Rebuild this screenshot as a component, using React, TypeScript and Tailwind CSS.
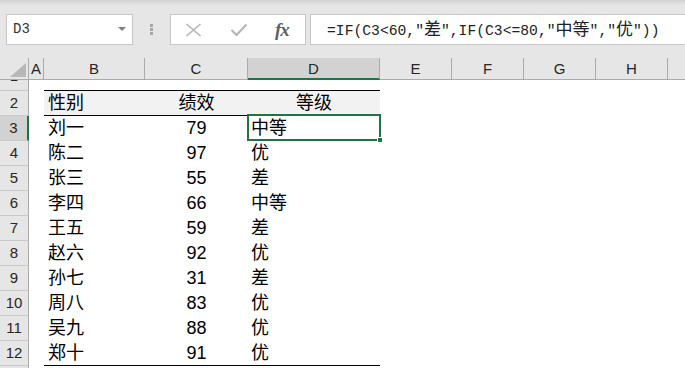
import type { ReactNode } from "react";

const COLS = [
  { key: "A", w: "w-[15px]" },
  { key: "B", w: "w-[101px]" },
  { key: "C", w: "w-[103px]" },
  { key: "D", w: "w-[132px]" },
  { key: "E", w: "w-[72px]" },
  { key: "F", w: "w-[72px]" },
  { key: "G", w: "w-[72px]" },
  { key: "H", w: "w-[72px]" },
  { key: "", w: "w-[72px]" },
] as const;

const ROWS: [string, number, string][] = [
  ["刘一", 79, "中等"],
  ["陈二", 97, "优"],
  ["张三", 55, "差"],
  ["李四", 66, "中等"],
  ["王五", 59, "差"],
  ["赵六", 92, "优"],
  ["孙七", 31, "差"],
  ["周八", 83, "优"],
  ["吴九", 88, "优"],
  ["郑十", 91, "优"],
];

const cellFont = "font-['Liberation_Sans','Noto_Sans_CJK_SC',sans-serif] text-[18px] text-black";
const hdrFont = "font-['Liberation_Sans',sans-serif] text-[15px] text-[#262626]";

function Cjk({ children }: { children: ReactNode }) {
  return (
    <span className="font-['Noto_Sans_CJK_SC',sans-serif] text-[17px]">{children}</span>
  );
}

function RowHead({ n, h, active }: { n: number; h: string; active?: boolean }) {
  return (
    <div
      className={`${h} w-[29px] shrink-0 flex items-center justify-center border-b border-[#c9c9c9] ${hdrFont} ${
        active
          ? "bg-[#d2d2d2] border-r-2 border-r-[#217346] text-[#217346]"
          : "bg-[#e6e6e6] border-r border-r-[#ababab]"
      }`}
    >
      {n}
    </div>
  );
}

export default function App() {
  return (
    <div className="w-[685px] h-[368px] overflow-hidden bg-[#e6e6e6] flex flex-col">
      <div className="h-[5px] shrink-0 bg-gradient-to-b from-[#d2d2d2] to-[#e6e6e6]" />

      {/* formula bar */}
      <div className="mt-[9px] h-[31px] shrink-0 flex items-stretch">
        <div className="ml-[6px] w-[127px] bg-white border border-[#c6c6c6] flex items-center pl-[6px] pr-[6px]">
          <span className="font-['Liberation_Mono',monospace] text-[14px] text-[#333]">D3</span>
          <svg className="ml-auto" width="8" height="5" viewBox="0 0 8 5">
            <polygon points="0,0 8,0 4,4" fill="#808080" />
          </svg>
        </div>
        <div className="w-[37px] flex flex-col items-center justify-center gap-[1px]">
          <div className="w-[3px] h-[3px] bg-[#a6a6a6]" />
          <div className="w-[3px] h-[3px] bg-[#a6a6a6]" />
          <div className="w-[3px] h-[3px] bg-[#a6a6a6]" />
        </div>
        <div className="w-[136px] bg-white border border-[#c6c6c6] flex items-center">
          <svg className="ml-[14px]" width="17" height="14" viewBox="0 0 17 14">
            <path d="M1.5 1 L15.5 13 M15.5 1 L1.5 13" stroke="#b3b3b3" strokeWidth="1.6" fill="none" />
          </svg>
          <svg className="ml-[28px]" width="18" height="14" viewBox="0 0 18 14">
            <path d="M1.5 7 L6.5 12 L16.5 1.5" stroke="#b3b3b3" strokeWidth="2" fill="none" />
          </svg>
          <span className="ml-[27px] font-['Liberation_Serif',serif] italic font-semibold text-[19px] leading-none text-[#5f5f5f] tracking-[-1px]">
            fx
          </span>
        </div>
        <div className="ml-[4px] flex-1 bg-white border border-[#c6c6c6] border-r-0 flex items-center pl-[16px] pb-[2px]">
          <span className="font-['Liberation_Mono',monospace] text-[14.7px] text-[#222] whitespace-pre">
            =IF(C3&lt;60,"<Cjk>差</Cjk>",IF(C3&lt;=80,"<Cjk>中等</Cjk>","<Cjk>优</Cjk>"))
          </span>
        </div>
      </div>

      {/* column headers */}
      <div className="mt-[13px] h-[22px] shrink-0 flex">
        <div className="w-[29px] shrink-0 border-r border-b border-[#ababab] flex items-end justify-end pr-[2px] pb-[2px]">
          <svg width="16" height="14" viewBox="0 0 16 14">
            <polygon points="0,14 16,14 16,0" fill="#b7b7b7" />
          </svg>
        </div>
        {COLS.map((c, i) => (
          <div
            key={i}
            className={`${c.w} shrink-0 flex items-center justify-center pt-[2px] border-r border-r-[#ababab] ${hdrFont} ${
              c.key === "D"
                ? "bg-[#d2d2d2] border-b-2 border-b-[#217346] text-[#1f4e33]"
                : "border-b border-b-[#ababab]"
            }`}
          >
            {c.key}
          </div>
        ))}
      </div>

      {/* row 1 (scrolled, partly hidden) */}
      <div className="h-[11px] shrink-0 flex bg-white">
        <div className="h-[11px] w-[29px] shrink-0 overflow-hidden bg-[#e6e6e6] border-r border-b border-[#ababab] border-b-[#c9c9c9]">
          <div className={`-mt-[16px] h-[25px] flex items-center justify-center ${hdrFont}`}>1</div>
        </div>
        <div className="w-[15px] shrink-0" />
        <div className="w-[336px] shrink-0 border-b border-black" />
      </div>

      {/* row 2: table header */}
      <div className="h-[25px] shrink-0 flex bg-white">
        <RowHead n={2} h="h-[25px]" />
        <div className="w-[15px] shrink-0" />
        <div className={`w-[336px] shrink-0 flex bg-[#f2f2f2] border-b border-black ${cellFont}`}>
          <div className="w-[101px] pl-[4px] flex items-center">性别</div>
          <div className="w-[103px] flex items-center justify-center">绩效</div>
          <div className="w-[132px] flex items-center justify-center">等级</div>
        </div>
      </div>

      {ROWS.map(([name, score, grade], i) => {
        const last = i === ROWS.length - 1;
        const active = i === 0;
        return (
          <div key={name} className="h-[25px] shrink-0 flex bg-white">
            <RowHead n={i + 3} h="h-[25px]" active={active} />
            <div className="w-[15px] shrink-0" />
            <div
              className={`w-[336px] shrink-0 flex ${cellFont} ${last ? "border-b border-black" : ""}`}
            >
              <div className="w-[101px] pl-[4px] flex items-center">{name}</div>
              <div className="w-[103px] flex items-center justify-center">{score}</div>
              <div className="relative w-[132px] pl-[3px] flex items-center">
                {grade}
                {active ? (
                  <>
                    <div className="absolute left-[-1px] top-[-2px] w-[134px] h-[27px] border-2 border-[#217346]" />
                    <div className="absolute left-[129px] top-[21px] w-[6px] h-[6px] bg-[#217346] border border-white" />
                  </>
                ) : null}
              </div>
            </div>
          </div>
        );
      })}

      <div className="flex-1 flex bg-white">
        <div className="w-[29px] shrink-0 bg-[#e6e6e6] border-r border-[#ababab]" />
      </div>
    </div>
  );
}
